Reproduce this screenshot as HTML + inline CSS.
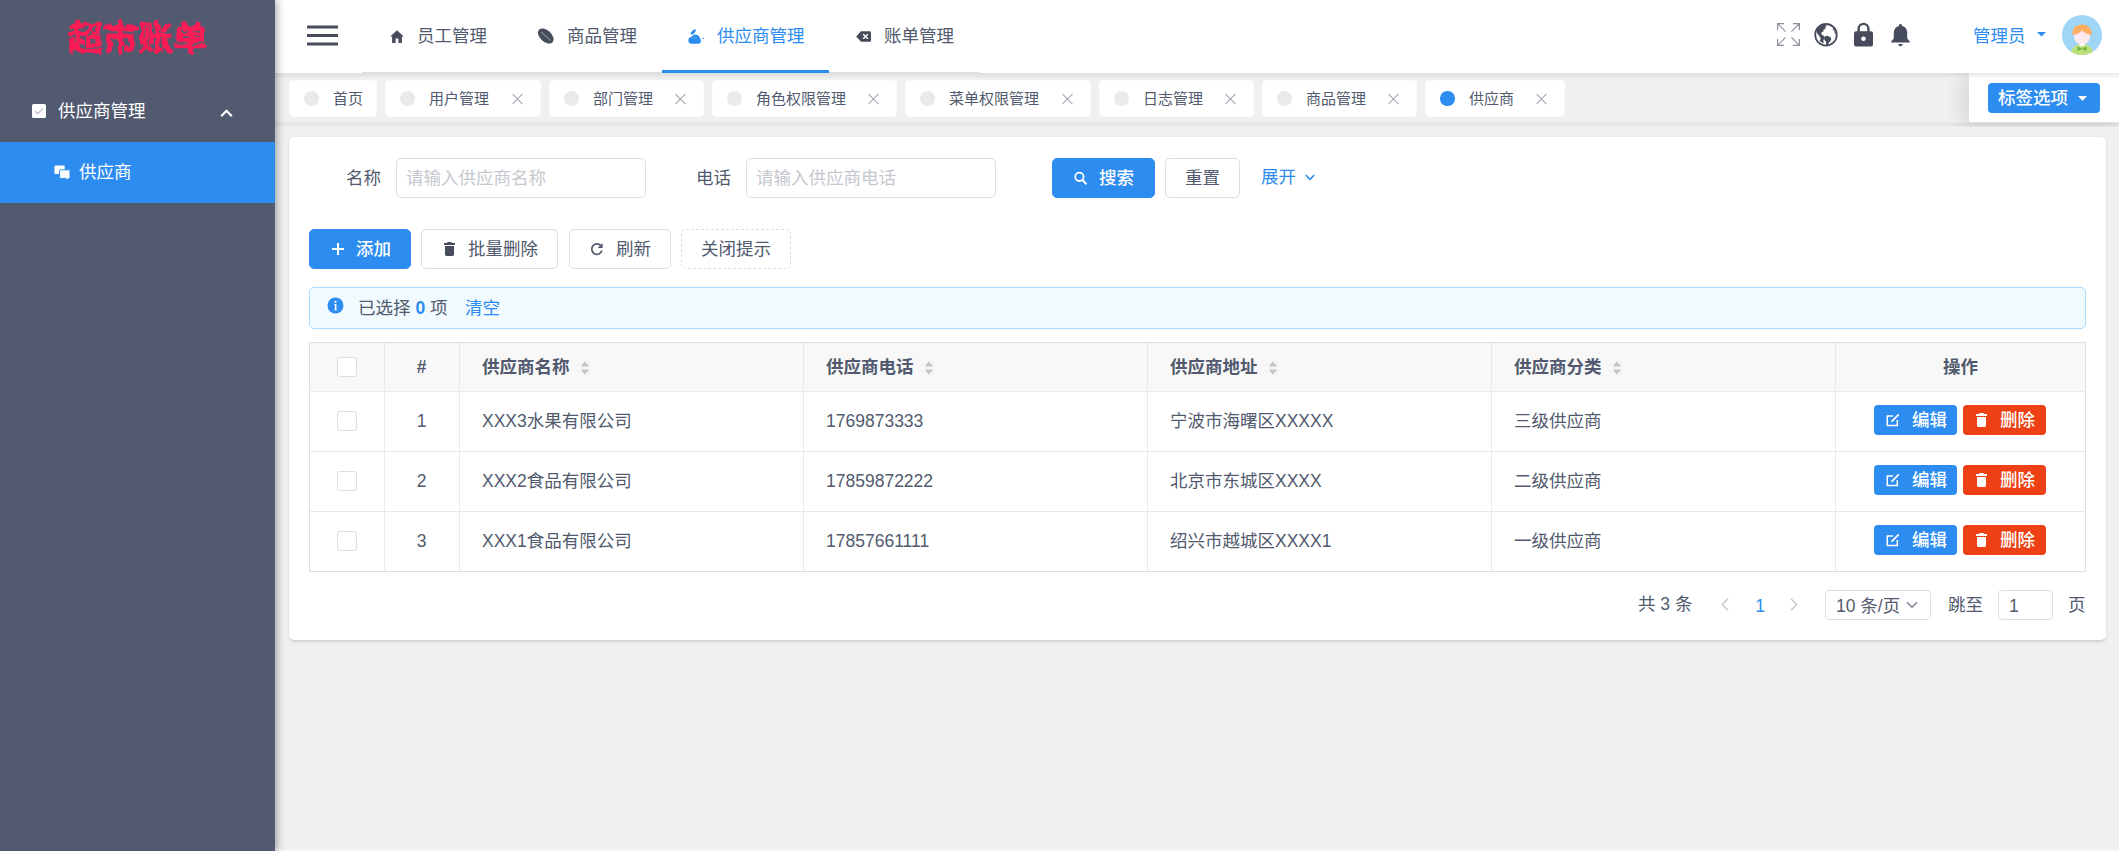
<!DOCTYPE html>
<html lang="zh-CN">
<head>
<meta charset="utf-8">
<title>超市账单</title>
<style>
*{box-sizing:border-box;margin:0;padding:0}
html,body{width:2119px;height:851px;overflow:hidden}
body{position:relative;background:#f0f0f0;font-family:"Liberation Sans","Noto Sans CJK SC",sans-serif;font-size:17.5px;color:#515a6e;line-height:1}
.abs{position:absolute}
.t{position:absolute;white-space:nowrap;line-height:26px;height:26px}
svg{position:absolute;display:block;overflow:visible}

/* sidebar */
#side{left:0;top:0;width:275px;height:851px;background:#515a6e;box-shadow:2.500px 0 7.500px rgba(0,21,41,.35);z-index:5}
#logo{left:58px;top:10.5px;width:160px;height:56px;line-height:56px;text-align:center;color:#fb1c55;font-size:35px;font-weight:700;letter-spacing:0;-webkit-text-stroke:.7px #fb1c55;filter:url(#rough)}
#mtitle{left:58px;top:98px;color:#fff}
#mactive{left:0;top:141.500px;width:275px;height:61px;background:#2d8cf0}
#msub{left:79px;top:159px;color:#fff}

/* header */
#head{left:275px;top:0;width:1844px;height:72.5px;background:#fff;box-shadow:0 2.5px 1.25px 1.25px rgba(100,100,100,.1);z-index:3}
#tagbar{left:275px;top:72.5px;width:1844px;height:54.5px;background:#f0f0f0;overflow:hidden;z-index:1}
#tagband{left:0;top:49.500px;width:1844px;height:5px;background:linear-gradient(to bottom,rgba(100,100,100,0) 0%,rgba(100,100,100,.09) 30%,rgba(100,100,100,.09) 55%,rgba(100,100,100,0) 100%)}
.nav{color:#515a6e}
.nav.on{color:#2d8cf0}
#navline{left:662px;top:70px;width:167px;height:3px;background:#2d8cf0;z-index:4}

/* tags */
.tag{position:absolute;z-index:2;top:79.500px;height:37.500px;background:#fff;border-radius:4px;border:1px solid #fcfcfc}
.tag i{position:absolute;left:14px;top:10.500px;width:14.500px;height:14.500px;border-radius:50%;background:#e8eaec}
.tag i.on{background:#2d8cf0}
.tag span{position:absolute;left:43px;top:5px;line-height:26px;font-size:15px;color:#515a6e;white-space:nowrap}
.tag b{position:absolute;right:17px;top:12.500px;width:11px;height:11px}
.tag b:before,.tag b:after{content:"";position:absolute;left:5px;top:-1.500px;width:1.300px;height:14px;background:#9ea3ad}
.tag b:before{transform:rotate(45deg)}
.tag b:after{transform:rotate(-45deg)}
#tagopt{left:1694px;top:5px;width:151px;height:44px;background:#fff;box-shadow:-3.75px 0 18.75px 3.75px rgba(0,0,0,.1)}
#tagoptcap{left:1694px;top:0;width:151px;height:5px;background:#fdfdfd}
#tagbtn{left:1988px;top:83px;width:112px;height:30px;background:#2d8cf0;border-radius:4px;z-index:3}

/* card */
#card{left:289px;top:137px;width:1816.500px;height:503px;background:#fff;border-radius:5px;box-shadow:0 1.500px 3px rgba(0,0,0,.13)}
.inp{position:absolute;height:40px;border:1px solid #dcdee2;border-radius:5px;background:#fff}
.inp span{position:absolute;left:9px;top:6px;line-height:26px;color:#c5c8ce;white-space:nowrap}
.btn{position:absolute;height:40px;border:1px solid #dcdee2;border-radius:5px;background:#fff;color:#515a6e}
.btn.pri{background:#2d8cf0;border-color:#2d8cf0;color:#fff;font-weight:500}
.btn.dash{border-style:dashed}
.btn span{position:absolute;top:6px;line-height:26px;white-space:nowrap}

/* table */
#alert{left:309px;top:287px;width:1777px;height:41.500px;background:#f0faff;border:1px solid #abdcff;border-radius:5px}
#tbl{left:309px;top:342px;width:1777px;height:230px;border:1px solid #dcdee2;background:#fff}
#thead{left:310px;top:343px;width:1775px;height:48px;background:#f8f8f9}
.hl{position:absolute;left:310px;width:1775px;height:1px;background:#e8eaec}
.vl{position:absolute;top:343px;width:1px;height:228px;background:#e8eaec}
.th{font-weight:700;font-size:17.5px;color:#515a6e}
.td{color:#515a6e;font-size:17.5px}
.cb{position:absolute;width:20px;height:20px;border:1px solid #dcdee2;border-radius:3px;background:#fff}
.sb{position:absolute;height:30px;border-radius:4px}
.sb span{position:absolute;top:2px;line-height:26px;color:#fff;font-size:17.5px;white-space:nowrap;font-weight:500}
</style>
</head>
<body>

<svg width="0" height="0" style="left:0;top:0"><defs><filter id="rough" x="-10%" y="-20%" width="120%" height="150%"><feTurbulence type="fractalNoise" baseFrequency="0.13" numOctaves="2" seed="3" result="n"/><feDisplacementMap in="SourceGraphic" in2="n" scale="6" xChannelSelector="R" yChannelSelector="G"/></filter></defs></svg>
<!-- SIDEBAR -->
<div id="side" class="abs">
  <div id="logo" class="abs">超市账单</div>
  <div id="mtitle" class="t">供应商管理</div>
  <div id="mactive" class="abs"></div>
  <div id="msub" class="t" style="z-index:2">供应商</div>
  <svg style="left:32px;top:104px" width="14" height="14" viewBox="0 0 14 14"><rect x="0" y="0" width="14" height="14" rx="1.5" fill="#fff"/><path d="M3.2 7.2l2.6 2.6 5-5.4" fill="none" stroke="#bfc4cf" stroke-width="1.4"/></svg>
  <svg style="left:220px;top:107.500px" width="13" height="10" viewBox="0 0 13 10"><path d="M1.2 8.2L6.5 2.8l5.3 5.4" fill="none" stroke="#fff" stroke-width="2.2"/></svg>
  <svg style="left:54px;top:165px;z-index:2" width="17" height="16" viewBox="0 0 17 16"><path d="M1.5 0.5h8.2a1 1 0 0 1 1 1v6.4a1 1 0 0 1-1 1H1.5a1 1 0 0 1-1-1V1.5a1 1 0 0 1 1-1z" fill="#fff"/><path d="M6.6 4.8h8.4a1 1 0 0 1 1 1v6.6a1 1 0 0 1-1 1h-.6l.4 2.3-3-2.3H6.6a1 1 0 0 1-1-1V5.8a1 1 0 0 1 1-1z" fill="#fff" stroke="#2d8cf0" stroke-width="1"/></svg>

</div>

<!-- HEADER -->
<div id="head" class="abs"></div>
<div class="abs" style="left:362px;top:71.500px;width:618px;height:1.250px;background:#dcdee2;z-index:4"></div>
<div id="navline" class="abs"></div>
<div id="hdr" class="abs" style="left:0;top:0;z-index:4">
  
  <svg style="left:307px;top:25px" width="31" height="21" viewBox="0 0 31 21"><path d="M0 2h31M0 10.5h31M0 19h31" stroke="#464c5b" stroke-width="3" fill="none"/></svg>
  <svg style="left:390px;top:30px" width="14" height="13" viewBox="0 0 14 13"><path d="M7 0.3L0.2 6.6h1.9V13h3.5V8.6h2.8V13h3.5V6.6h1.9z" fill="#464c5b"/></svg>
  <svg style="left:538px;top:28px" width="16" height="16" viewBox="0 0 16 16"><ellipse cx="7.800" cy="8" rx="9.300" ry="5.700" transform="rotate(43 7.800 8)" fill="#464c5b"/><path d="M3 3.800l9.600 8.600" stroke="#8a93a0" stroke-width="1.100" fill="none"/></svg>
  <svg style="left:688px;top:29px" width="17" height="15" viewBox="0 0 17 15"><path d="M0.300 11.400C0.300 9.400 1.600 8 3.400 7.900 4.200 6.400 5.600 5.500 7.300 5.500c2 0 3.600 1.100 4.500 2.900.8 1.500 1.300 3 1.100 4.300-.2 1.300-1.200 2-2.600 2H3.300C1.500 14.700.3 13.300.3 11.400z" fill="#2d8cf0"/><ellipse cx="5.300" cy="2.900" rx="3.300" ry="1.500" transform="rotate(-47 5.300 2.900)" fill="#2d8cf0"/><ellipse cx="15.200" cy="9.500" rx="1" ry=".6" fill="#4a7fc0"/><path d="M4.600 9.300c1.400-1 2.800-1 4.200.2" stroke="#6db3f7" stroke-width=".9" fill="none"/></svg>
  <svg style="left:856px;top:31px" width="15" height="11" viewBox="0 0 15 11"><path d="M5 .2h8.800a1.200 1.200 0 0 1 1.200 1.200v8.200a1.200 1.200 0 0 1-1.200 1.200H5L.2 5.500z" fill="#464c5b"/><path d="M7.200 3.200l4.600 4.600M11.800 3.200L7.200 7.800" stroke="#fff" stroke-width="1.500" fill="none"/></svg>

  <svg style="left:1777px;top:23px" width="23" height="23" viewBox="0 0 23 23"><path d="M0.600 7V.6H7M.6.600l8 8M16 .6h6.400V7M22.400.6l-8 8M.6 16v6.400H7M.6 22.400l8-8M22.400 16v6.400H16M22.400 22.400l-8-8" stroke="#8c919d" stroke-width="1.200" fill="none"/></svg>
  <svg style="left:1814px;top:23px" width="24" height="24" viewBox="0 0 24 24"><circle cx="12" cy="11.800" r="10.800" fill="#fff" stroke="#464c5b" stroke-width="1.800"/><path d="M5.500 4.200c1.500-1.500 4-2.600 6-2.400l1 1.200-1.400 1.400.6 1.600-2 .6-.4 2-2 1 .4 2.200 1.800.6 1.400 2.200-1.600 2.600.4 3.200c-1.500-.5-3-1.500-4-2.600l1-2.400-2-3.400-1-.6-1.600-4.400C2.500 6.500 4 5 5.500 4.200z" fill="#464c5b"/><path d="M10.600 13.600l2.800-.8 3.400 1.600.4 2.400-2 2.600-1.600 2.800-1.400.2-.2-3.600-1.800-2.400z" fill="#464c5b"/><path d="M19 4.500c1.800 1.800 3 4.500 3 7.300l-1.200-1.600-.6-2.600-1.600-1.400z" fill="#464c5b"/></svg>
  <svg style="left:1854px;top:22px" width="19" height="25" viewBox="0 0 19 25"><path d="M4.600 10V6.800a4.900 4.900 0 0 1 9.800 0V10" fill="none" stroke="#464c5b" stroke-width="2.400"/><rect x="0" y="9.200" width="19" height="15.400" rx="2" fill="#464c5b"/><circle cx="9.500" cy="16.800" r="2.300" fill="#fff"/></svg>
  <svg style="left:1891px;top:24px" width="19" height="23" viewBox="0 0 19 23"><path d="M9.500 0c.9 0 1.500.6 1.500 1.400v.7c3.200.7 5.200 3.300 5.200 6.700v5.600l2.600 3v1H.2v-1l2.600-3V8.800c0-3.400 2-6 5.200-6.700v-.7C8 .6 8.600 0 9.500 0z" fill="#464c5b"/><path d="M7.300 20h4.400a2.200 2.200 0 0 1-4.400 0z" fill="#464c5b"/></svg>
  <svg style="left:2037px;top:32px" width="9" height="5" viewBox="0 0 9 5"><path d="M0 0h9L4.500 4.600z" fill="#2d8cf0"/></svg>
  <svg style="left:2062px;top:15px" width="40" height="40" viewBox="0 0 40 40"><defs><clipPath id="avc"><circle cx="20" cy="20" r="20"/></clipPath></defs><g clip-path="url(#avc)"><rect width="40" height="40" fill="#9fd5f6"/><ellipse cx="20" cy="38" rx="11" ry="9" fill="#bde07a"/><rect x="17.500" y="26" width="5" height="5" fill="#fff"/><ellipse cx="20" cy="21.500" rx="8" ry="8" fill="#fdeaf1"/><path d="M10.500 20c-1-6 3.500-10.500 9.500-10.500s10.500 4.500 9.500 10.500c-3-.5-6.500-1.500-9.500-4.500-3 3-6.500 4-9.500 4.500z" fill="#ffad63"/><path d="M15.500 31.500l4.500 2.200 4.500-2.200v4.600L20 33.900l-4.500 2.200z" fill="#6db33f"/></g></svg>
  <div class="t nav" style="left:417px;top:23px">员工管理</div>
  <div class="t nav" style="left:567px;top:23px">商品管理</div>
  <div class="t nav on" style="left:717px;top:23px">供应商管理</div>
  <div class="t nav" style="left:884px;top:23px">账单管理</div>
  <div class="t nav on" style="left:1973px;top:23px">管理员</div>
</div>

<!-- TAGS -->
<div id="tagbar" class="abs"><div id="tagopt" class="abs"></div><div id="tagoptcap" class="abs"></div><div id="tagband" class="abs"></div></div>
<div class="tag" style="left:289px;width:88px"><i></i><span>首页</span></div>
<div class="tag" style="left:385px;width:156px"><i></i><span>用户管理</span><b></b></div>
<div class="tag" style="left:549px;width:155px"><i></i><span>部门管理</span><b></b></div>
<div class="tag" style="left:712px;width:185px"><i></i><span>角色权限管理</span><b></b></div>
<div class="tag" style="left:905px;width:186px"><i></i><span>菜单权限管理</span><b></b></div>
<div class="tag" style="left:1099px;width:155px"><i></i><span>日志管理</span><b></b></div>
<div class="tag" style="left:1262px;width:155px"><i></i><span>商品管理</span><b></b></div>
<div class="tag" style="left:1425px;width:140px"><i class="on"></i><span>供应商</span><b></b></div>
<div id="tagbtn" class="abs"><div class="t" style="left:10px;top:2px;color:#fff;font-weight:500">标签选项</div><svg style="left:90px;top:12.500px" width="9" height="5" viewBox="0 0 9 5"><path d="M0 0h9L4.500 5z" fill="#fff"/></svg></div>

<div class="abs" style="left:275px;top:848.5px;width:1844px;height:2.5px;background:rgba(255,255,255,.3)"></div>
<!-- CARD -->
<div id="card" class="abs"></div>

<div class="t" style="left:346px;top:165px">名称</div>
<div class="inp" style="left:396px;top:158px;width:250px"><span>请输入供应商名称</span></div>
<div class="t" style="left:696px;top:165px">电话</div>
<div class="inp" style="left:746px;top:158px;width:250px"><span>请输入供应商电话</span></div>
<div class="btn pri" style="left:1052px;top:158px;width:103px"><span style="left:46px">搜索</span></div>
<div class="btn" style="left:1165px;top:158px;width:75px"><span style="left:19px">重置</span></div>
<div class="t" style="left:1261px;top:164px;color:#2d8cf0">展开</div>

<div class="btn pri" style="left:309px;top:229px;width:102px"><span style="left:46px">添加</span></div>
<div class="btn" style="left:421px;top:229px;width:137px"><span style="left:46px">批量删除</span></div>
<div class="btn" style="left:569px;top:229px;width:101.500px"><span style="left:46px">刷新</span></div>
<div class="btn dash" style="left:681px;top:229px;width:110px"><span style="left:19px">关闭提示</span></div>

<div id="alert" class="abs"></div>
<div class="t" style="left:358px;top:295px">已选择 <span style="color:#2d8cf0;font-weight:700">0</span> 项</div>
<div class="t" style="left:465px;top:295px;color:#2d8cf0">清空</div>

<!-- TABLE -->
<div id="tbl" class="abs"></div>
<div id="thead" class="abs"></div>
<div class="hl" style="top:391px"></div>
<div class="hl" style="top:451px"></div>
<div class="hl" style="top:511px"></div>
<div class="vl" style="left:384px"></div>
<div class="vl" style="left:459px"></div>
<div class="vl" style="left:803px"></div>
<div class="vl" style="left:1147px"></div>
<div class="vl" style="left:1491px"></div>
<div class="vl" style="left:1835px"></div>

<div class="cb" style="left:337px;top:357px"></div>
<div class="t th" style="left:384px;top:354px;width:75px;text-align:center">#</div>
<div class="t th" style="left:482px;top:354px">供应商名称</div>
<svg style="left:580px;top:361px" width="10" height="14" viewBox="0 0 10 14"><path d="M5 0l4.200 5.400H.8z" fill="#c5c8ce"/><path d="M5 14l4.200-5.400H.8z" fill="#c5c8ce"/></svg>
<div class="t th" style="left:826px;top:354px">供应商电话</div>
<svg style="left:924px;top:361px" width="10" height="14" viewBox="0 0 10 14"><path d="M5 0l4.200 5.400H.8z" fill="#c5c8ce"/><path d="M5 14l4.200-5.400H.8z" fill="#c5c8ce"/></svg>
<div class="t th" style="left:1170px;top:354px">供应商地址</div>
<svg style="left:1268px;top:361px" width="10" height="14" viewBox="0 0 10 14"><path d="M5 0l4.200 5.400H.8z" fill="#c5c8ce"/><path d="M5 14l4.200-5.400H.8z" fill="#c5c8ce"/></svg>
<div class="t th" style="left:1514px;top:354px">供应商分类</div>
<svg style="left:1612px;top:361px" width="10" height="14" viewBox="0 0 10 14"><path d="M5 0l4.200 5.400H.8z" fill="#c5c8ce"/><path d="M5 14l4.200-5.400H.8z" fill="#c5c8ce"/></svg>
<div class="t th" style="left:1835px;top:354px;width:251px;text-align:center">操作</div>
<div class="cb" style="left:337px;top:411px"></div>
<div class="t td" style="left:384px;top:408px;width:75px;text-align:center">1</div>
<div class="t td" style="left:482px;top:408px">XXX3水果有限公司</div>
<div class="t td" style="left:826px;top:408px">1769873333</div>
<div class="t td" style="left:1170px;top:408px">宁波市海曙区XXXXX</div>
<div class="t td" style="left:1514px;top:408px">三级供应商</div>
<div class="sb" style="left:1874px;top:405px;width:83px;background:#2d8cf0"><svg style="left:12px;top:8px" width="14" height="14" viewBox="0 0 14 14"><path d="M11.300 7V12.600H1.300V3H7" fill="none" stroke="#fff" stroke-width="1.500"/><path d="M5.600 8.600L12.800 1.400" fill="none" stroke="#fff" stroke-width="1.800"/></svg><span style="left:38px">编辑</span></div>
<div class="sb" style="left:1963px;top:405px;width:83px;background:#ed4014"><svg style="left:13px;top:8px" width="11" height="14" viewBox="0 0 11 14"><path d="M3.600 0h3.800l.6 1H11v2H0V1h3z M1 4h9v8.600a1.400 1.400 0 0 1-1.400 1.400H2.400A1.400 1.400 0 0 1 1 12.600z" fill="#fff"/></svg><span style="left:37px">删除</span></div>
<div class="cb" style="left:337px;top:471px"></div>
<div class="t td" style="left:384px;top:468px;width:75px;text-align:center">2</div>
<div class="t td" style="left:482px;top:468px">XXX2食品有限公司</div>
<div class="t td" style="left:826px;top:468px">17859872222</div>
<div class="t td" style="left:1170px;top:468px">北京市东城区XXXX</div>
<div class="t td" style="left:1514px;top:468px">二级供应商</div>
<div class="sb" style="left:1874px;top:465px;width:83px;background:#2d8cf0"><svg style="left:12px;top:8px" width="14" height="14" viewBox="0 0 14 14"><path d="M11.300 7V12.600H1.300V3H7" fill="none" stroke="#fff" stroke-width="1.500"/><path d="M5.600 8.600L12.800 1.400" fill="none" stroke="#fff" stroke-width="1.800"/></svg><span style="left:38px">编辑</span></div>
<div class="sb" style="left:1963px;top:465px;width:83px;background:#ed4014"><svg style="left:13px;top:8px" width="11" height="14" viewBox="0 0 11 14"><path d="M3.600 0h3.800l.6 1H11v2H0V1h3z M1 4h9v8.600a1.400 1.400 0 0 1-1.400 1.400H2.400A1.400 1.400 0 0 1 1 12.600z" fill="#fff"/></svg><span style="left:37px">删除</span></div>
<div class="cb" style="left:337px;top:531px"></div>
<div class="t td" style="left:384px;top:528px;width:75px;text-align:center">3</div>
<div class="t td" style="left:482px;top:528px">XXX1食品有限公司</div>
<div class="t td" style="left:826px;top:528px">17857661111</div>
<div class="t td" style="left:1170px;top:528px">绍兴市越城区XXXX1</div>
<div class="t td" style="left:1514px;top:528px">一级供应商</div>
<div class="sb" style="left:1874px;top:525px;width:83px;background:#2d8cf0"><svg style="left:12px;top:8px" width="14" height="14" viewBox="0 0 14 14"><path d="M11.300 7V12.600H1.300V3H7" fill="none" stroke="#fff" stroke-width="1.500"/><path d="M5.600 8.600L12.800 1.400" fill="none" stroke="#fff" stroke-width="1.800"/></svg><span style="left:38px">编辑</span></div>
<div class="sb" style="left:1963px;top:525px;width:83px;background:#ed4014"><svg style="left:13px;top:8px" width="11" height="14" viewBox="0 0 11 14"><path d="M3.600 0h3.800l.6 1H11v2H0V1h3z M1 4h9v8.600a1.400 1.400 0 0 1-1.400 1.400H2.400A1.400 1.400 0 0 1 1 12.600z" fill="#fff"/></svg><span style="left:37px">删除</span></div>
<div class="t" style="left:1638px;top:591px">共 3 条</div>
<svg style="left:1721px;top:598px" width="8" height="13" viewBox="0 0 8 13"><path d="M7 .8L1.400 6.500 7 12.200" fill="none" stroke="#c5c8ce" stroke-width="1.500"/></svg>
<div class="t" style="left:1740px;top:593px;width:40px;text-align:center;color:#2d8cf0">1</div>
<svg style="left:1790px;top:598px" width="8" height="13" viewBox="0 0 8 13"><path d="M1 .8l5.600 5.700L1 12.200" fill="none" stroke="#c5c8ce" stroke-width="1.500"/></svg>
<div class="inp" style="left:1825px;top:590px;width:106px;height:30px;border-radius:4px"><div class="t" style="left:10px;top:2px;color:#515a6e">10 条/页</div><svg style="left:80px;top:10px" width="12" height="8" viewBox="0 0 12 8"><path d="M1 1.200l5 5 5-5" fill="none" stroke="#808695" stroke-width="1.500"/></svg></div>
<div class="t" style="left:1948px;top:592px">跳至</div>
<div class="inp" style="left:1998px;top:590px;width:55px;height:30px;border-radius:4px"><div class="t" style="left:10px;top:2px;color:#515a6e">1</div></div>
<div class="t" style="left:2068px;top:592px">页</div>
<svg style="left:1074px;top:171px;z-index:2" width="14" height="14" viewBox="0 0 14 14"><circle cx="5.400" cy="5.800" r="4.200" fill="none" stroke="#fff" stroke-width="1.800"/><path d="M8.400 9l4 4.200" stroke="#fff" stroke-width="2" fill="none"/></svg>
<svg style="left:1305px;top:174px" width="10" height="7" viewBox="0 0 10 7"><path d="M.8 1l4.200 4.400L9.200 1" fill="none" stroke="#2d8cf0" stroke-width="1.600"/></svg>
<svg style="left:332px;top:243px" width="12" height="12" viewBox="0 0 12 12"><path d="M6 0v12M0 6h12" stroke="#fff" stroke-width="2" fill="none"/></svg>
<svg style="left:444px;top:242px" width="11" height="14" viewBox="0 0 11 14"><path d="M3.600 0h3.800l.6 1H11v2H0V1h3z M1 4h9v8.600a1.400 1.400 0 0 1-1.400 1.400H2.400A1.400 1.400 0 0 1 1 12.600z" fill="#464c5b"/></svg>
<svg style="left:590px;top:242px" width="14" height="14" viewBox="0 0 14 14"><path d="M11.200 4.200A5.200 5.200 0 1 0 11.900 8.600" fill="none" stroke="#515a6e" stroke-width="1.700"/><path d="M12.600 1v5H7.600z" fill="#515a6e"/></svg>
<svg style="left:327px;top:297px" width="17" height="17" viewBox="0 0 17 17"><circle cx="8.500" cy="8.500" r="8" fill="#2d8cf0"/><circle cx="8.500" cy="4.800" r="1.100" fill="#fff"/><path d="M7.300 7h2.100v5.400h.8v.9H7v-.9h.9V7.900h-.6z" fill="#fff"/></svg>
</body>
</html>
